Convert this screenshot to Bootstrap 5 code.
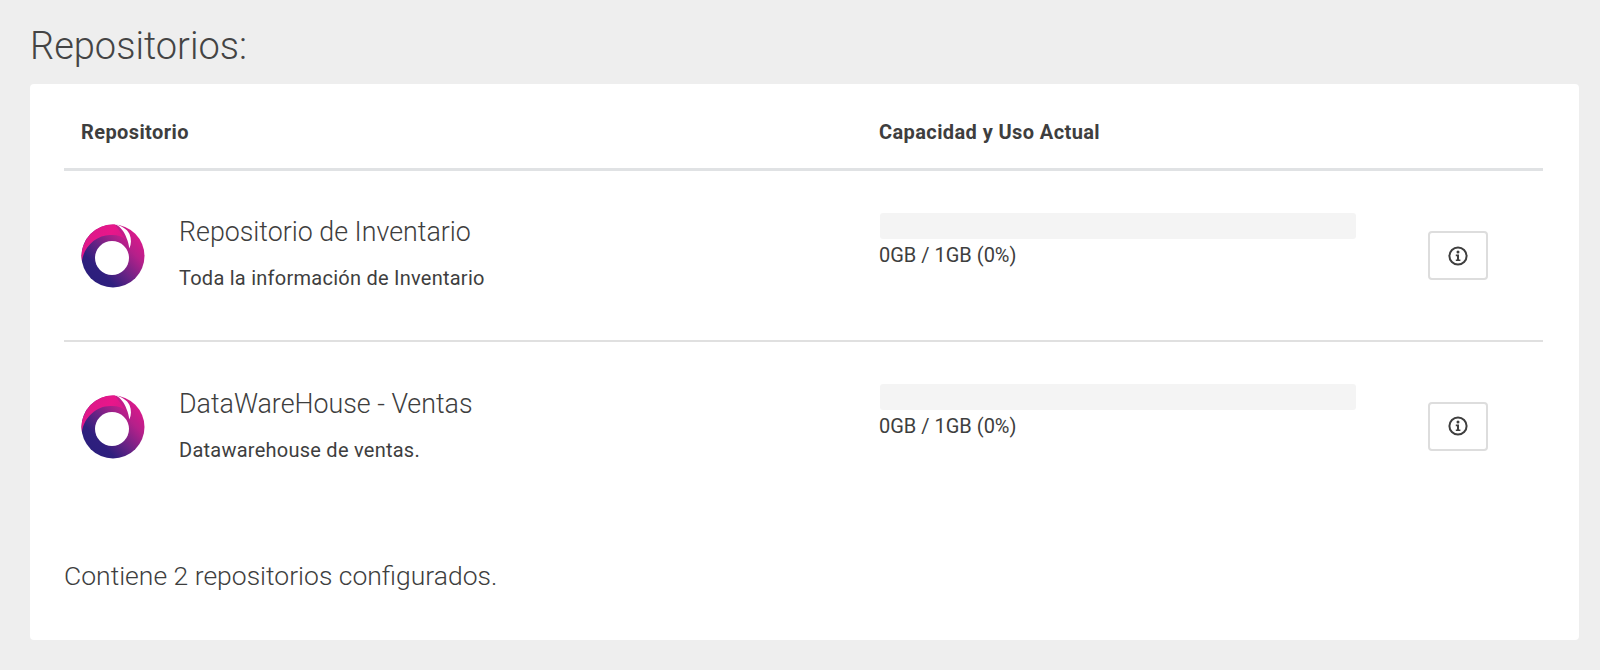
<!DOCTYPE html>
<html lang="es"><head><meta charset="utf-8"><title>Repositorios</title>
<link href="https://cdn.jsdelivr.net/npm/bootstrap@5.3.0/dist/css/bootstrap.min.css" rel="stylesheet">
<style>
html,body{height:670px;overflow:hidden}
body{background:#eee;color:#3e3e3e;font-family:"Roboto","Noto Sans",sans-serif;font-size:16px;padding:21px 21px 0 30px}
.page-head{font-size:38px;font-weight:300;line-height:50px;margin:0 0 13px;color:#444}
.repo-panel{height:556px;border:0;border-radius:4px;padding:16px 36px 16px 34px}
.repo-table{width:1479px;table-layout:fixed;margin:0}
.repo-table th{font-size:20px;font-weight:700;letter-spacing:.4px;line-height:26px;padding:19px 17px 23px;border-bottom:3px solid #e0e2e4;color:#3e3e3e}
.repo-table td{height:171px;padding:0;border-bottom:2px solid #e0e0e0;vertical-align:top;color:#3e3e3e}
.repo-table tr:last-child td{border-bottom:0}
.repo-logo{width:64px;height:65px;margin:53px 34px 0 17px;flex:none}
.repo-name{font-size:26.8px;font-weight:300;line-height:32px;margin-top:45px}
.repo-table tr:last-child .repo-name{margin-top:46px}
.repo-desc{font-size:20px;letter-spacing:.25px;line-height:24px;margin-top:18px}
.meter{height:26px;width:476px;margin:42px 0 0 18px;background:#f4f4f4;border-radius:3px}
.meter-label{font-size:20px;line-height:24px;margin:4px 0 0 17px}
.info-btn{width:60px;height:49px;margin:60px 0 0 36px;padding:0;background:#fff;border:2px solid #ddd;border-radius:4px;display:flex;align-items:center;justify-content:center}
.repo-total{font-size:26.5px;font-weight:300;margin-top:48px;line-height:32px}
</style></head><body>
<h1 class="page-head">Repositorios:</h1>
<div class="card repo-panel">
<svg width="0" height="0" class="position-absolute"><defs>
<linearGradient id="rg" x1="0.9" y1="0.1" x2="0.1" y2="0.85"><stop offset="0" stop-color="#e0178a"/><stop offset=".27" stop-color="#b5208a"/><stop offset=".55" stop-color="#6b2385"/><stop offset=".8" stop-color="#2f1f7e"/><stop offset="1" stop-color="#2b1f7c"/></linearGradient>
<linearGradient id="rp" x1="0" y1="0.2" x2="1" y2="0.8"><stop offset="0" stop-color="#d91a89"/><stop offset=".5" stop-color="#e8168a"/><stop offset="1" stop-color="#c71c89"/></linearGradient>
<symbol id="swirl" viewBox="0 0 64 65">
<circle cx="32" cy="32" r="31.5" fill="url(#rg)"/>
<path d="M.9 37C3 22 16 11 29 11C36 10.5 41 12 45 16L34 .6A31.5 31.5 0 0 0 .9 37Z" fill="url(#rp)"/>
<circle cx="31" cy="34" r="17" fill="#fff"/>
<path d="M34 0C41 2 46 5 48.5 10C50.5 15 50.5 20 48.3 24.5C47.8 21 47 17 45.5 14C43.5 8 40 3 34 0Z" fill="#fff"/>
</symbol>
<symbol id="inf" viewBox="0 0 20 20"><circle cx="10" cy="10" r="8.6" fill="none" stroke="#3e3e3e" stroke-width="2"/><circle cx="10" cy="6" r="1.5" fill="#3e3e3e"/><path d="M7.8 8.6H11V13.4H12.4V15H7.8V13.4H9V10.2H7.8Z" fill="#3e3e3e"/></symbol>
</defs></svg>
<table class="table repo-table">
<colgroup><col style="width:798px"><col style="width:530px"><col></colgroup>
<thead><tr><th>Repositorio</th><th>Capacidad y Uso Actual</th><th></th></tr></thead>
<tbody>
<tr><td><div class="d-flex"><svg class="repo-logo"><use href="#swirl"/></svg><div><div class="repo-name">Repositorio de Inventario</div><div class="repo-desc">Toda la información de Inventario</div></div></div></td>
<td><div class="meter"></div><div class="meter-label">0GB / 1GB (0%)</div></td>
<td><button type="button" class="btn info-btn" aria-label="Info"><svg width="20" height="20"><use href="#inf"/></svg></button></td></tr>
<tr><td><div class="d-flex"><svg class="repo-logo"><use href="#swirl"/></svg><div><div class="repo-name">DataWareHouse - Ventas</div><div class="repo-desc">Datawarehouse de ventas.</div></div></div></td>
<td><div class="meter"></div><div class="meter-label">0GB / 1GB (0%)</div></td>
<td><button type="button" class="btn info-btn" aria-label="Info"><svg width="20" height="20"><use href="#inf"/></svg></button></td></tr>
</tbody></table>
<div class="repo-total">Contiene 2 repositorios configurados.</div>
</div>
</body></html>
